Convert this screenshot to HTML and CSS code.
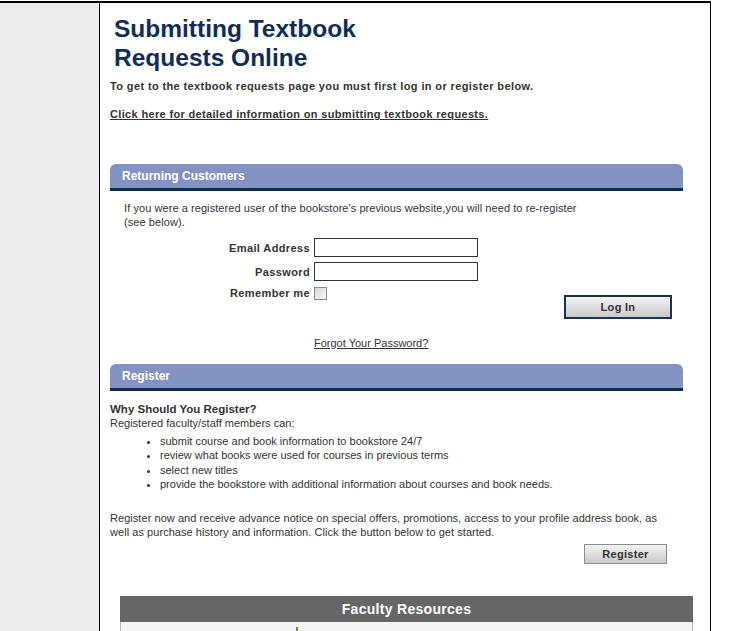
FILE: index.html
```html
<!DOCTYPE html>
<html>
<head>
<meta charset="utf-8">
<title>Submitting Textbook Requests Online</title>
<link rel="stylesheet" href="styles.css">
</head>
<body>
<div class="page">
  <aside class="side"></aside>
  <main class="main">
    <h1 class="title">Submitting Textbook<br>Requests Online</h1>
    <p class="intro">To get to the textbook requests page you must first log in or register below.</p>
    <p class="intro link-line"><a href="#" class="link">Click here for detailed information on submitting textbook requests.</a></p>

    <section class="panel returning">
      <h2 class="bar">Returning Customers</h2>
      <p class="note">If you were a registered user of the bookstore's previous website,you will need to re-register<br>(see below).</p>
      <form class="login">
        <label class="lbl">Email Address</label>
        <input class="field" type="text">
        <label class="lbl">Password</label>
        <input class="field" type="password">
        <label class="lbl">Remember me</label>
        <span class="check"></span>
      </form>
      <div class="login-actions">
        <button type="button" class="btn btn-login">Log In</button>
      </div>
      <p class="forgot"><a href="#" class="link-plain">Forgot Your Password?</a></p>
    </section>

    <section class="panel register">
      <h2 class="bar">Register</h2>
      <h3 class="why">Why Should You Register?</h3>
      <p class="text">Registered faculty/staff members can:</p>
      <ul class="benefits">
        <li>submit course and book information to bookstore 24/7</li>
        <li>review what books were used for courses in previous terms</li>
        <li>select new titles</li>
        <li>provide the bookstore with additional information about courses and book needs.</li>
      </ul>
      <p class="text promo">Register now and receive advance notice on special offers, promotions, access to your profile address book, as well as purchase history and information. Click the button below to get started.</p>
      <div class="reg-actions">
        <button type="button" class="btn btn-register">Register</button>
      </div>
    </section>

    <section class="resources">
      <h2 class="res-head">Faculty Resources</h2>
      <div class="res-row">
        <span class="res-mark"></span>
        <span class="res-text">Study Guides / Notebooks</span>
      </div>
    </section>
  </main>
</div>
</body>
</html>
```
FILE: styles.css
```css
html, body {
  margin: 0;
  padding: 0;
  background: #fff;
}
body {
  font-family: "Liberation Sans", Arial, sans-serif;
  color: #333;
  font-size: 11px;
  line-height: 14px;
}
.page {
  display: flex;
  width: 711px;
  margin-top: 1px;
  border-top: 2px solid #000;
  min-height: 628px;
}
.side {
  width: 99px;
  background: #ececec;
  border-right: 1px solid #000;
  flex: none;
}
.main {
  width: 574px;
  padding: 0 27px 0 10px;
  border-right: 1px solid #000;
  overflow: hidden;
}
.title {
  margin: 11px 0 0;
  padding-left: 4px;
  font-size: 24.5px;
  line-height: 29px;
  font-weight: bold;
  color: #0f2d55;
}
.intro {
  margin: 7px 0 0;
  font-weight: bold;
  letter-spacing: 0.38px;
}
.link-line {
  margin-top: 14px;
  letter-spacing: 0.34px;
}
.link, .link-plain {
  color: #333;
  text-decoration: underline;
}
.panel {
  margin-top: 43px;
}
.register {
  margin-top: 14px;
}
.bar {
  margin: 0;
  height: 24px;
  line-height: 24px;
  padding-left: 12px;
  background: #8492c1;
  border-bottom: 3px solid #0e2a4c;
  border-radius: 6px 6px 0 0;
  color: #fff;
  font-size: 12px;
  font-weight: bold;
}
.note {
  margin: 10px 0 0;
  padding-left: 14px;
  letter-spacing: 0.07px;
}
.login {
  display: grid;
  grid-template-columns: 200px 164px;
  column-gap: 4px;
  row-gap: 5px;
  margin-top: 9px;
  align-items: center;
}
.lbl {
  text-align: right;
  font-weight: bold;
  letter-spacing: 0.38px;
}
.field {
  box-sizing: border-box;
  width: 164px;
  height: 19px;
  margin: 0;
  padding: 0 2px;
  border: 1px solid #333;
  background: #fff;
}
.check {
  width: 11px;
  height: 11px;
  border: 1px solid #8a8a8a;
  background: linear-gradient(135deg, #d6d6d6, #f8f8f8);
}
.login-actions {
  display: flex;
  justify-content: flex-end;
  padding-right: 11px;
  margin-top: -5px;
}
.btn {
  font-family: "Liberation Sans", Arial, sans-serif;
  font-weight: bold;
  font-size: 11px;
  letter-spacing: 0.3px;
  color: #333;
  background: linear-gradient(#f4f4f4, #c9c9c9);
  cursor: pointer;
  padding: 0;
  box-sizing: border-box;
}
.btn-login {
  width: 108px;
  height: 24px;
  border: 2px solid #1c3350;
}
.forgot {
  margin: 17px 0 0;
  padding-left: 204px;
}
.why {
  margin: 11px 0 0;
  font-size: 11.5px;
  line-height: 14px;
  font-weight: bold;
}
.text {
  margin: 0;
}
.benefits {
  margin: 4px 0 0;
  padding-left: 50px;
  list-style: disc;
}
.benefits li {
  line-height: 14.3px;
}
.promo {
  margin-top: 20px;
  max-width: 556px;
  letter-spacing: 0.05px;
}
.reg-actions {
  display: flex;
  justify-content: flex-end;
  padding-right: 16px;
  margin-top: 5px;
}
.btn-register {
  width: 83px;
  height: 20px;
  border: 1px solid #8c8c8c;
}
.resources {
  margin: 32px -10px 0 10px;
}
.res-head {
  margin: 0;
  height: 26px;
  line-height: 26px;
  background: #666;
  color: #fff;
  text-align: center;
  font-size: 14px;
  font-weight: bold;
  letter-spacing: 0.3px;
}
.res-row {
  display: flex;
  align-items: flex-start;
  height: 40px;
  background: #f4f4f4;
  border: 1px solid #bbb;
  border-top: none;
  padding-top: 5px;
}
.res-mark {
  width: 2px;
  height: 10px;
  margin-left: 175px;
  background: #5a9a3a;
}
.res-text {
  margin-left: 72px;
  margin-top: 2px;
  font-size: 10px;
}
```
